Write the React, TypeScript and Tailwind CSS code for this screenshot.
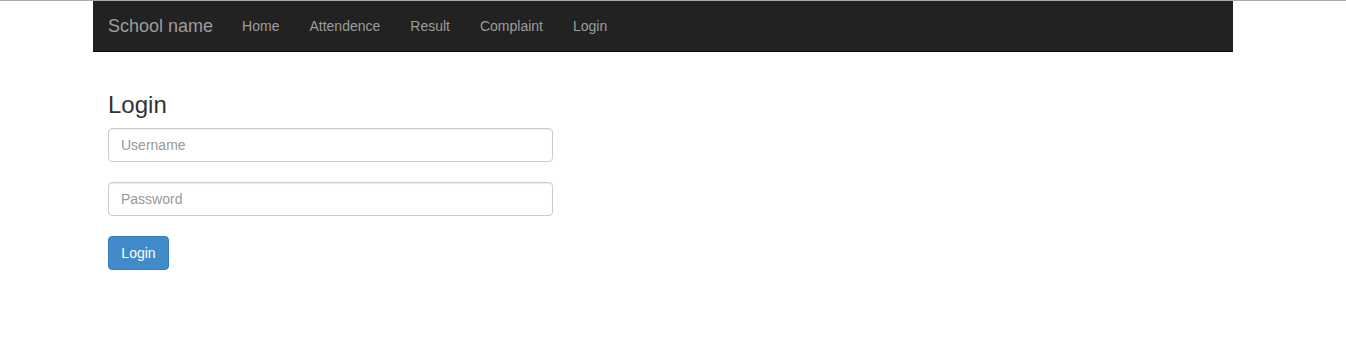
const links = ['Home', 'Attendence', 'Result', 'Complaint', 'Login']

function Navbar() {
  return (
    <nav className="ml-[93px] w-[1140px] h-[51px] bg-[#222222] border-b border-[#080808] flex items-stretch">
      <a className="pl-[15px] pr-[14px] flex items-center text-[18px] text-[#9d9d9d] leading-[20px]">School name</a>
      <ul className="flex">
        {links.map((l) => (
          <li key={l} className="px-[15px] flex items-center text-[14px] text-[#9d9d9d] leading-[20px]">
            {l}
          </li>
        ))}
      </ul>
    </nav>
  )
}

export default function App() {
  return (
    <div className="min-h-screen bg-white font-['Liberation_Sans',Arial,sans-serif] text-[#333333]">
      <div className="h-px bg-[#a9a9a9]" />
      <Navbar />
      <main className="ml-[108px] w-[445px] pt-[20px]">
        <h3 className="mt-[20px] mb-[10px] text-[24px] leading-[1.1] font-normal text-[#333333]">Login</h3>
        <div className="flex flex-col gap-[20px]">
          <input
            className="h-[34px] w-full px-[12px] text-[14px] border border-[#cccccc] rounded-[4px] shadow-[inset_0_1px_1px_rgba(0,0,0,0.075)] placeholder:text-[#999999] outline-none"
            placeholder="Username"
          />
          <input
            type="password"
            className="h-[34px] w-full px-[12px] text-[14px] border border-[#cccccc] rounded-[4px] shadow-[inset_0_1px_1px_rgba(0,0,0,0.075)] placeholder:text-[#999999] outline-none"
            placeholder="Password"
          />
          <div>
            <button className="h-[34px] w-[61px] text-[14px] text-white bg-[#428bca] border border-[#357ebd] rounded-[4px]">
              Login
            </button>
          </div>
        </div>
      </main>
    </div>
  )
}
